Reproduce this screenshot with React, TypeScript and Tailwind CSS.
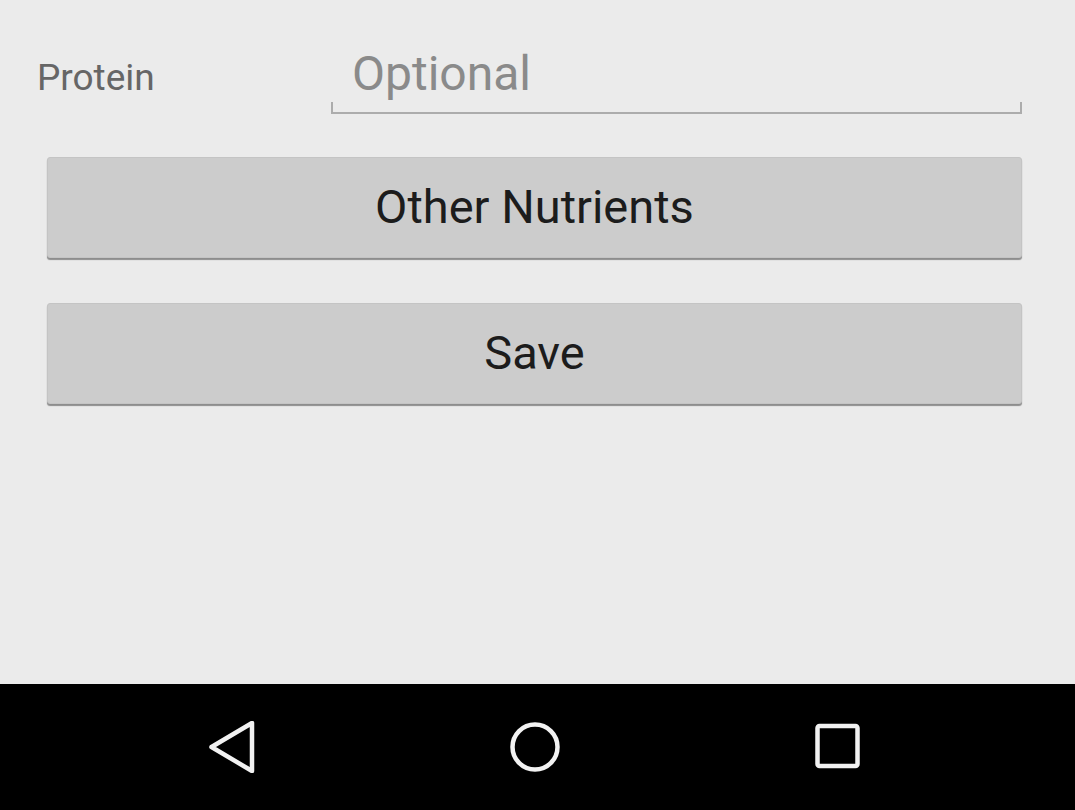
const font = { fontFamily: "Roboto, 'Noto Sans', sans-serif" };

function NavBar() {
  return (
    <div className="h-[126px] bg-black flex items-center justify-center gap-[251px] pr-[5px]">
      <svg width="52" height="52" viewBox="0 0 52 52" fill="none" stroke="#f2f2f2" strokeWidth="4.5" strokeLinejoin="round">
        <path d="M5.5 26 L46 2 L46 50 Z" />
      </svg>
      <svg width="52" height="52" viewBox="0 0 52 52" fill="none" stroke="#f2f2f2" strokeWidth="4.5">
        <circle cx="26" cy="26" r="22.5" />
      </svg>
      <svg width="52" height="52" viewBox="0 0 52 52" fill="none" stroke="#f2f2f2" strokeWidth="4.5">
        <rect x="5.5" y="5" width="40" height="40" rx="2" />
      </svg>
    </div>
  );
}

function GrayButton({ label }: { label: string }) {
  return (
    <button
      className="w-[975px] h-[101px] ml-[47px] bg-[#cccccc] rounded-[3px] border border-[#c4c4c4] shadow-[0_2px_1px_rgba(0,0,0,0.4)] text-[47px] text-[#1c1c1c] flex items-center justify-center"
      style={font}
    >
      {label}
    </button>
  );
}

export default function App() {
  return (
    <div className="w-[1075px] h-[810px] flex flex-col bg-[#ebebeb]" style={font}>
      <div className="flex-1 flex flex-col">
        <div className="flex items-baseline pt-[46px]">
          <div className="w-[331px] pl-[37px] text-[37px] text-[#666666]">Protein</div>
          <div className="w-[691px] flex flex-col">
            <div className="pl-[21px] text-[48px] leading-[56px] text-[#8a8a8a]">Optional</div>
            <div className="h-[12px] border-l-2 border-r-2 border-b-2 border-[#acacac]" />
          </div>
        </div>
        <div className="flex flex-col gap-[45px] mt-[43px]">
          <GrayButton label="Other Nutrients" />
          <GrayButton label="Save" />
        </div>
      </div>
      <NavBar />
    </div>
  );
}
